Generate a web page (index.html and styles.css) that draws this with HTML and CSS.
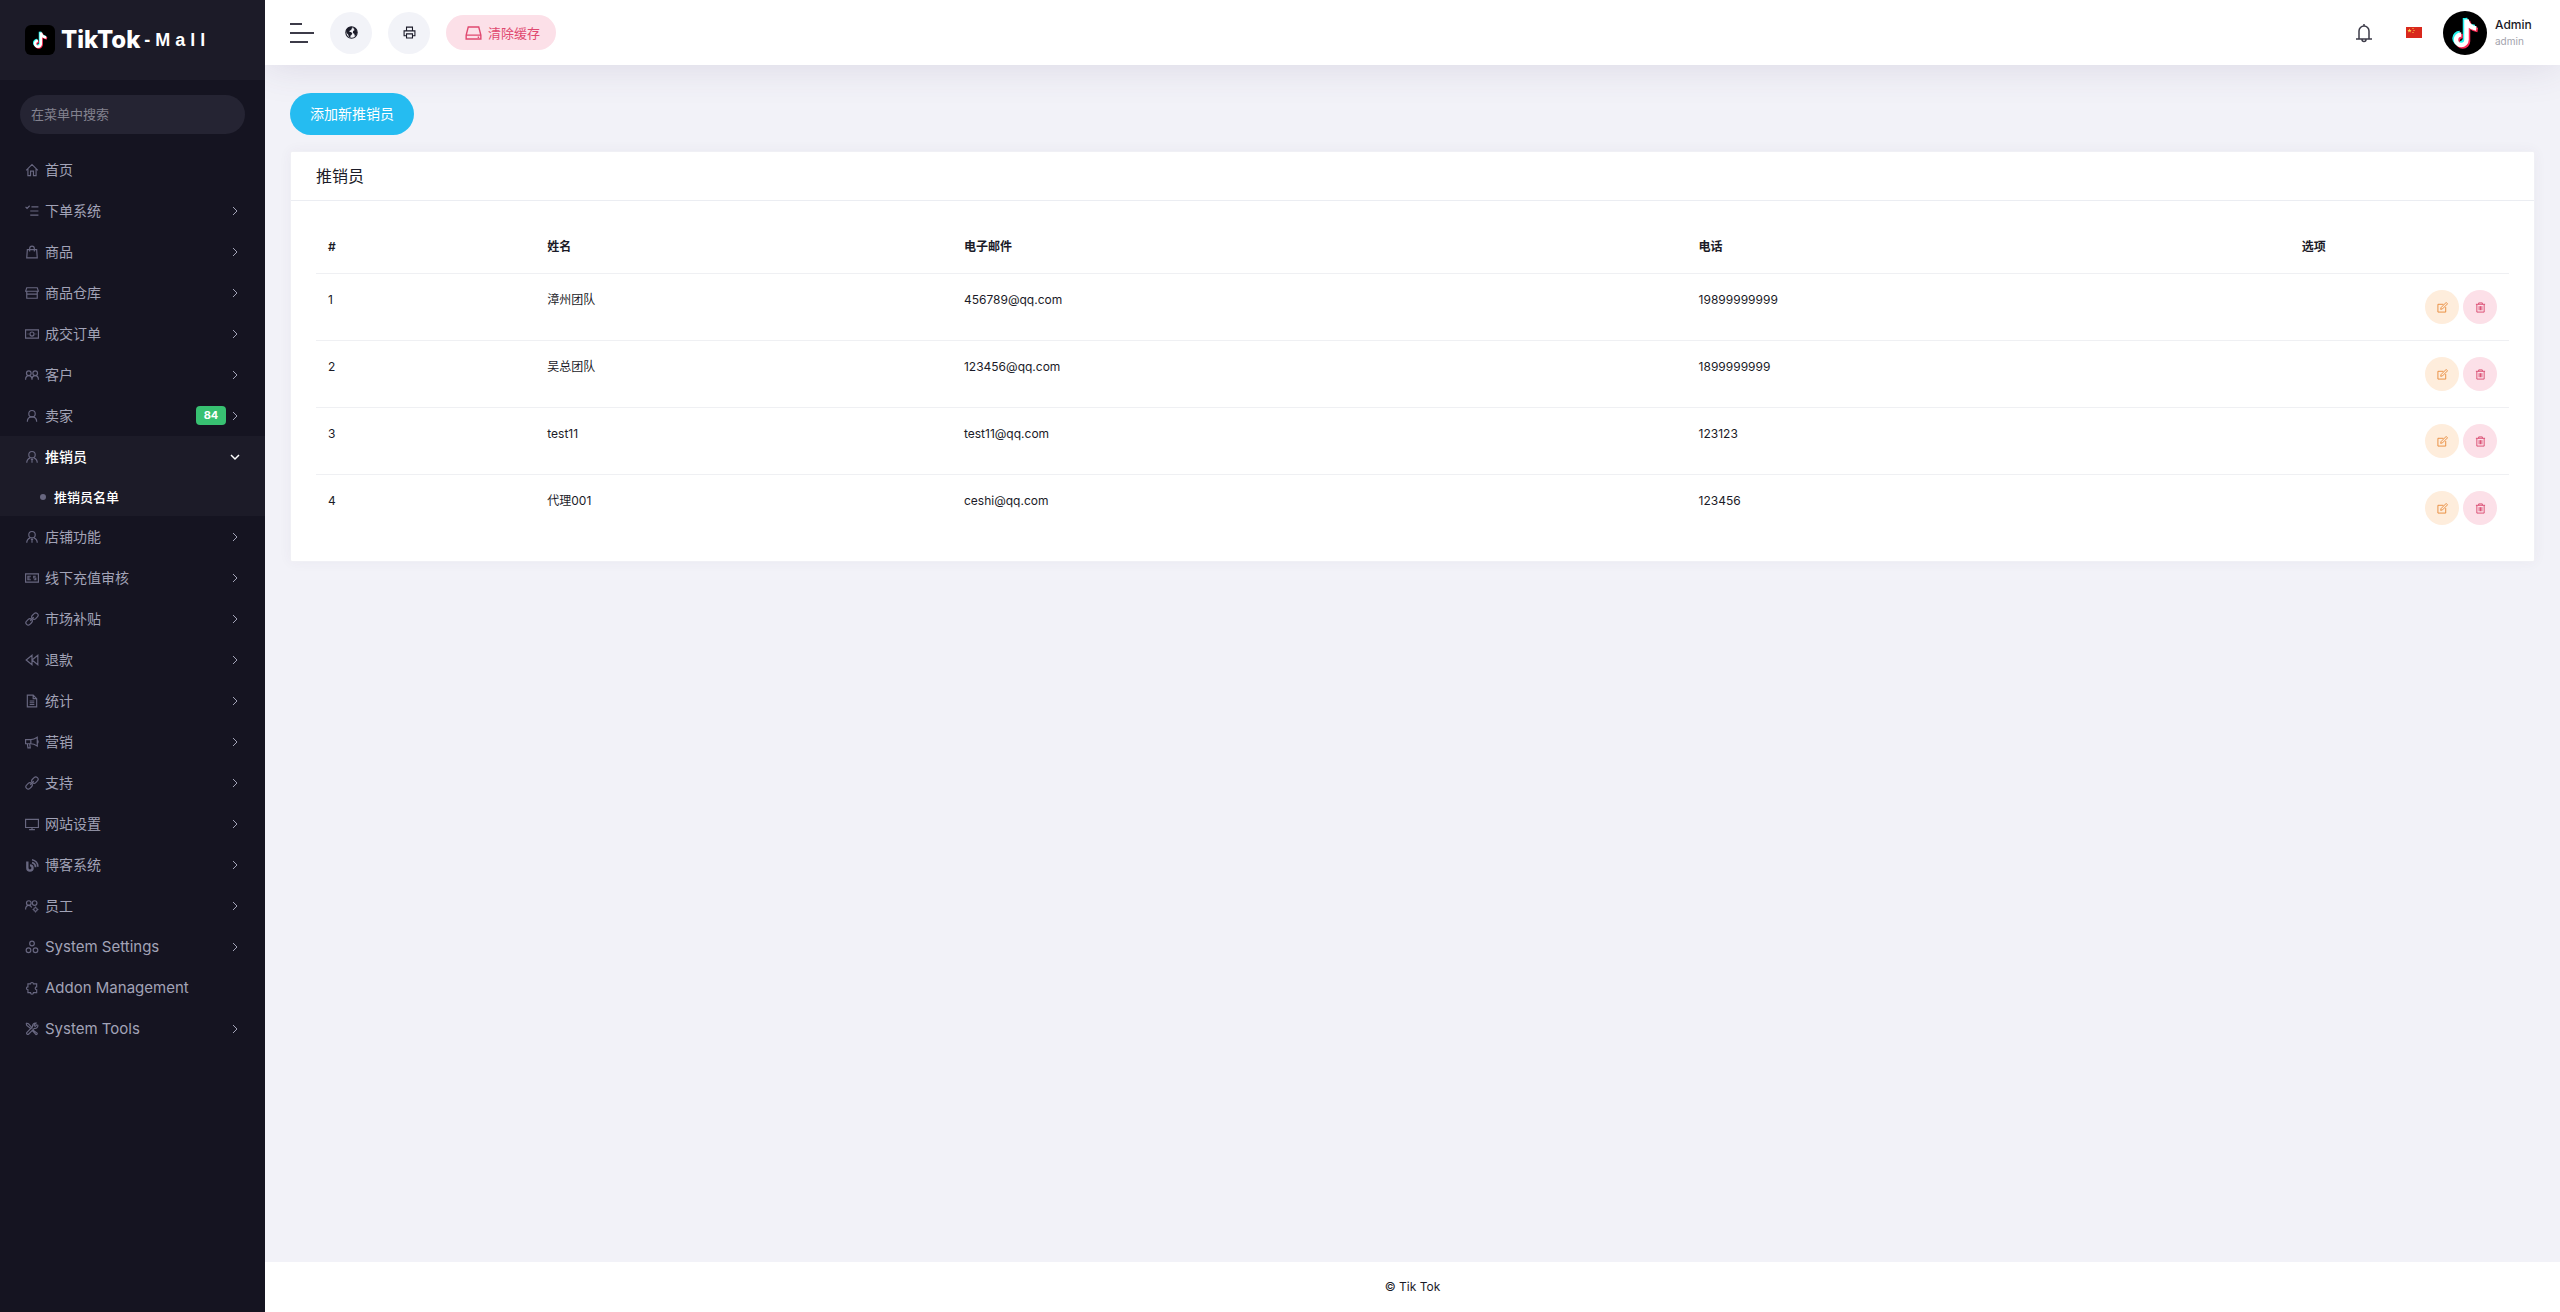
FILE: index.html
```
<!doctype html>
<html lang="zh-CN">
<head>
<meta charset="UTF-8">
<meta name="viewport" content="width=device-width, initial-scale=1">
<title>推销员</title>
<link rel="stylesheet" href="styles.css">
</head>

<body>
<!-- 图标 -->
<svg class="sprite" aria-hidden="true">
	<symbol id="i-home" viewBox="0 0 24 24"><path d="M2 12.5L12 2.5l10 10M5 10v11.5h4.5V14h5v7.5H19V10"/></symbol>
	<symbol id="i-tasks" viewBox="0 0 24 24"><path d="M1 5l2.5 2.5L8 3M11 5h12M9 12h14M9 19h14"/></symbol>
	<symbol id="i-bag" viewBox="0 0 24 24"><path d="M4 8h16l1 14H3zM8 11V6a4 4 0 0 1 8 0v5"/></symbol>
	<symbol id="i-store" viewBox="0 0 24 24"><path d="M3 3h18l2 6H1zM3 9v12h18V9M3 14h18"/></symbol>
	<symbol id="i-money" viewBox="0 0 24 24"><path d="M1 5h22v14H1zM4.500 12h1.500M18 12h1.500"/><circle cx="12" cy="12" r="3.500"/></symbol>
	<symbol id="i-friends" viewBox="0 0 24 24"><circle cx="6.500" cy="9" r="4"/><circle cx="17.500" cy="9" r="4"/><path d="M1 20c0-4 2-7 5.500-7s5.500 3 5.500 7c0-4 2-7 5.500-7s5.500 3 5.500 7"/></symbol>
	<symbol id="i-user" viewBox="0 0 24 24"><circle cx="12" cy="8" r="5.500"/><path d="M4 22c0-5 3-8.500 8-8.500s8 3.500 8 8.500"/></symbol>
	<symbol id="i-agent" viewBox="0 0 24 24"><circle cx="12" cy="8" r="5.500"/><path d="M3 22c0-4 2-7 5.500-8.500M21 22c0-4-2-7-5.500-8.500M12 16v6M10 16h4"/></symbol>
	<symbol id="i-check" viewBox="0 0 24 24"><path d="M1 5h22v14H1zM10 9H5v6h5M6 12h3M18.500 9H15v3h3.500v3H15"/></symbol>
	<symbol id="i-link" viewBox="0 0 24 24"><rect x="11" y="3" width="12" height="8" rx="4" transform="rotate(-45 17 7)"/><rect x="1" y="13" width="12" height="8" rx="4" transform="rotate(-45 7 17)"/><path d="M9 15l6-6"/></symbol>
	<symbol id="i-back" viewBox="0 0 24 24"><path d="M12 4v16L2 12zM22 4v16l-10-8z"/></symbol>
	<symbol id="i-file" viewBox="0 0 24 24"><path d="M4 2h10l6 6v14H4zM14 2v6h6M8 12h8M8 15h8M8 18h8"/></symbol>
	<symbol id="i-horn" viewBox="0 0 24 24"><path d="M1 8h9c4 0 8-2 11-4v15c-3-2-7-4-11-4H1zM10 8v7M4 15l1 7h4l-1-7M21 9c2 0 2 5 0 5"/></symbol>
	<symbol id="i-screen" viewBox="0 0 24 24"><path d="M1 4h22v14H1zM12 18v3.500M7 21.500h10"/></symbol>
	<symbol id="i-blog" viewBox="0 0 24 24"><path d="M4 6v11a4.500 4.500 0 1 0 4.500-4.500" stroke-width="4"/><path d="M12 8a8 8 0 0 1 6 8M12 3a12 12 0 0 1 10 12" stroke-width="3"/></symbol>
	<symbol id="i-staff" viewBox="0 0 24 24"><circle cx="6.500" cy="7" r="4"/><circle cx="16.500" cy="7" r="4"/><path d="M1 18c0-4 2-7 5.500-7 2.500 0 4 1.500 5 3.500"/><circle cx="18" cy="18" r="3"/><path d="M18 13v2M18 21v2M13 18h2M21 18h2"/></symbol>
	<symbol id="i-cubes" viewBox="0 0 24 24"><circle cx="12" cy="6" r="4"/><circle cx="6" cy="17.500" r="4"/><circle cx="18" cy="17.500" r="4"/></symbol>
	<symbol id="i-addon" viewBox="0 0 24 24"><path d="M5 5h4.500a2.500 2.500 0 1 1 5 0H20v5a2 2 0 1 0 0 5v5h-5.500a2.500 2.500 0 1 1-5 0H5v-5a2.500 2.500 0 1 1 0-5z"/></symbol>
	<symbol id="i-tools" viewBox="0 0 24 24"><path d="M2 2l4 1 7 8M14 14l7 5.500a2 2 0 0 1-2 2L13 15M2 2l1 4 8 6M21 4l-3.500 3.500-2-2L19 2a5 5 0 0 0-6 6L3 18a2.200 2.200 0 0 0 3 3L16 11a5 5 0 0 0 6-6"/></symbol>
	<symbol id="i-right" viewBox="0 0 10 10"><path d="M3 1l4 4-4 4"/></symbol>
	<symbol id="i-down" viewBox="0 0 10 10"><path d="M1 3l4 4 4-4"/></symbol>
	<symbol id="i-globe" viewBox="0 0 24 24"><circle cx="12" cy="12" r="10.500"/><path class="solid" d="M2 9C3 4.500 7 1.500 12 1.500l2 2-2.500 2 .5 2-3 1-1 2.500h3l2.500 2.500-1.500 3-2 1.500v4L7 20l-1-4-3-3zM16 2.500l5 4 1.500 5.500-2 5.500-2.500.5-1-3.500-2.500-1.500.5-4 3-1.500-2-2z"/></symbol>
	<symbol id="i-print" viewBox="0 0 24 24"><path d="M6.500 9V2h11v7M6.500 18H2V9h20v9h-4.500M6.500 14.500h11V22h-11z"/></symbol>
	<symbol id="i-hdd" viewBox="0 0 24 20"><path d="M1.500 13L4.500 1.500h15l3 11.500v5.500h-21zM1.500 13h21M18 16h2"/></symbol>
	<symbol id="i-bell" viewBox="0 0 16 20"><path d="M0 16h16M3 16V8a5 5 0 0 1 10 0v8M8 3V1M6 16.500a2 2 0 0 0 4 0" stroke-width="1.500"/></symbol>
	<symbol id="i-edit" viewBox="0 0 24 24"><path d="M14 5H2v17h17V11M8 16l1-4L20 1l3 3-11 11z"/></symbol>
	<symbol id="i-trash" viewBox="0 0 24 24"><path d="M2 5h20M8 5V2h8v3M4 5v17h16V5M9 9v9M12 9v9M15 9v9"/></symbol>
	<symbol id="i-note" viewBox="0 0 24 24">
		<path class="cyan" d="M12 2v13.500a3.500 3.500 0 1 1-3.500-3.500M12 2c.5 3.500 3 5.500 6.500 6"/>
		<path class="red" d="M14 4v13.500a3.500 3.500 0 1 1-3.500-3.500M14 4c.5 3.500 3 5.500 6.500 6"/>
		<path class="white" d="M13 3v13.500a3.500 3.500 0 1 1-3.500-3.500M13 3c.5 3.500 3 5.500 6.500 6"/>
	</symbol>
</svg>

<div class="page">
	<aside class="sidebar">
		<a class="brand" href="#">
			<span class="brand-logo"><svg><use href="#i-note"/></svg></span>
			<span class="brand-name">TikTok</span>
			<span class="brand-mall">- M a l l</span>
		</a>
		<div class="search">
			<input type="text" placeholder="在菜单中搜索" aria-label="在菜单中搜索">
		</div>
		<nav>
			<ul class="menu">
				<li><a href="#"><svg class="icon"><use href="#i-home"/></svg><span class="text">首页</span></a></li>
				<li><a href="#"><svg class="icon"><use href="#i-tasks"/></svg><span class="text">下单系统</span><svg class="arrow"><use href="#i-right"/></svg></a></li>
				<li><a href="#"><svg class="icon"><use href="#i-bag"/></svg><span class="text">商品</span><svg class="arrow"><use href="#i-right"/></svg></a></li>
				<li><a href="#"><svg class="icon"><use href="#i-store"/></svg><span class="text">商品仓库</span><svg class="arrow"><use href="#i-right"/></svg></a></li>
				<li><a href="#"><svg class="icon"><use href="#i-money"/></svg><span class="text">成交订单</span><svg class="arrow"><use href="#i-right"/></svg></a></li>
				<li><a href="#"><svg class="icon"><use href="#i-friends"/></svg><span class="text">客户</span><svg class="arrow"><use href="#i-right"/></svg></a></li>
				<li><a href="#"><svg class="icon"><use href="#i-user"/></svg><span class="text">卖家</span><span class="badge">84</span><svg class="arrow"><use href="#i-right"/></svg></a></li>
				<li class="active">
					<a href="#"><svg class="icon"><use href="#i-agent"/></svg><span class="text">推销员</span><svg class="arrow"><use href="#i-down"/></svg></a>
					<ul class="submenu">
						<li><a href="#">推销员名单</a></li>
					</ul>
				</li>
				<li><a href="#"><svg class="icon"><use href="#i-agent"/></svg><span class="text">店铺功能</span><svg class="arrow"><use href="#i-right"/></svg></a></li>
				<li><a href="#"><svg class="icon"><use href="#i-check"/></svg><span class="text">线下充值审核</span><svg class="arrow"><use href="#i-right"/></svg></a></li>
				<li><a href="#"><svg class="icon"><use href="#i-link"/></svg><span class="text">市场补贴</span><svg class="arrow"><use href="#i-right"/></svg></a></li>
				<li><a href="#"><svg class="icon"><use href="#i-back"/></svg><span class="text">退款</span><svg class="arrow"><use href="#i-right"/></svg></a></li>
				<li><a href="#"><svg class="icon"><use href="#i-file"/></svg><span class="text">统计</span><svg class="arrow"><use href="#i-right"/></svg></a></li>
				<li><a href="#"><svg class="icon"><use href="#i-horn"/></svg><span class="text">营销</span><svg class="arrow"><use href="#i-right"/></svg></a></li>
				<li><a href="#"><svg class="icon"><use href="#i-link"/></svg><span class="text">支持</span><svg class="arrow"><use href="#i-right"/></svg></a></li>
				<li><a href="#"><svg class="icon"><use href="#i-screen"/></svg><span class="text">网站设置</span><svg class="arrow"><use href="#i-right"/></svg></a></li>
				<li><a href="#"><svg class="icon"><use href="#i-blog"/></svg><span class="text">博客系统</span><svg class="arrow"><use href="#i-right"/></svg></a></li>
				<li><a href="#"><svg class="icon"><use href="#i-staff"/></svg><span class="text">员工</span><svg class="arrow"><use href="#i-right"/></svg></a></li>
				<li><a href="#"><svg class="icon"><use href="#i-cubes"/></svg><span class="text en">System Settings</span><svg class="arrow"><use href="#i-right"/></svg></a></li>
				<li><a href="#"><svg class="icon"><use href="#i-addon"/></svg><span class="text en">Addon Management</span></a></li>
				<li><a href="#"><svg class="icon"><use href="#i-tools"/></svg><span class="text en">System Tools</span><svg class="arrow"><use href="#i-right"/></svg></a></li>
			</ul>
		</nav>
	</aside>

	<div class="content">
		<header class="topbar">
			<button class="toggler" type="button" aria-label="菜单"><span></span><span></span><span></span></button>
			<a class="round" href="#" aria-label="浏览网站"><svg><use href="#i-globe"/></svg></a>
			<a class="round" href="#" aria-label="POS"><svg><use href="#i-print"/></svg></a>
			<a class="clear-cache" href="#"><svg><use href="#i-hdd"/></svg>清除缓存</a>
			<div class="topbar-right">
				<button class="bell" type="button" aria-label="通知"><svg><use href="#i-bell"/></svg></button>
				<button class="lang" type="button" aria-label="语言">
					<svg viewBox="0 0 16 11"><path fill="#d9281c" d="M0 0h16v11H0z"/><path fill="#fbd34a" d="M3.500 1.500l.6 1.400h1.500l-1.200 1 .5 1.500-1.400-.9-1.400.9.500-1.500-1.200-1h1.500zM6.500 1h1v1h-1zM7.500 3h1v1h-1zM6.500 5h1v1h-1z"/></svg>
				</button>
				<a class="account" href="#">
					<span class="avatar"><svg><use href="#i-note"/></svg></span>
					<span class="who"><b>Admin</b><small>admin</small></span>
				</a>
			</div>
		</header>

		<main class="main">
			<a class="btn-add" href="#">添加新推销员</a>
			<section class="card">
				<h1 class="card-header">推销员</h1>
				<div class="card-body">
					<table>
						<colgroup><col class="w-id"><col class="w-name"><col class="w-mail"><col class="w-phone"><col class="w-opt"></colgroup>
						<thead>
							<tr><th>#</th><th>姓名</th><th>电子邮件</th><th>电话</th><th>选项</th></tr>
						</thead>
						<tbody>
							<tr>
								<td>1</td><td>漳州团队</td><td>456789@qq.com</td><td>19899999999</td>
								<td class="options"><div><a class="edit" href="#" aria-label="编辑"><svg><use href="#i-edit"/></svg></a><a class="delete" href="#" aria-label="删除"><svg><use href="#i-trash"/></svg></a></div></td>
							</tr>
							<tr>
								<td>2</td><td>吴总团队</td><td>123456@qq.com</td><td>1899999999</td>
								<td class="options"><div><a class="edit" href="#" aria-label="编辑"><svg><use href="#i-edit"/></svg></a><a class="delete" href="#" aria-label="删除"><svg><use href="#i-trash"/></svg></a></div></td>
							</tr>
							<tr>
								<td>3</td><td>test11</td><td>test11@qq.com</td><td>123123</td>
								<td class="options"><div><a class="edit" href="#" aria-label="编辑"><svg><use href="#i-edit"/></svg></a><a class="delete" href="#" aria-label="删除"><svg><use href="#i-trash"/></svg></a></div></td>
							</tr>
							<tr>
								<td>4</td><td>代理001</td><td>ceshi@qq.com</td><td>123456</td>
								<td class="options"><div><a class="edit" href="#" aria-label="编辑"><svg><use href="#i-edit"/></svg></a><a class="delete" href="#" aria-label="删除"><svg><use href="#i-trash"/></svg></a></div></td>
							</tr>
						</tbody>
					</table>
				</div>
			</section>
		</main>

		<footer class="footer">© Tik Tok</footer>
	</div>
</div>
</body>
</html>
```

FILE: styles.css
```
*{box-sizing:border-box;}
body,ul,h1{margin:0;padding:0;}
ul{list-style-type:none;}
a{color:inherit;text-decoration:none;}
button{padding:0;border:0;background:none;cursor:pointer;}
svg{display:block;fill:none;stroke:currentColor;stroke-width:2;}
body{background:#f2f2f8;color:#1b1b28;font:12px/20px Inter,"Noto Sans CJK SC",sans-serif;}
.sprite{position:absolute;width:0;height:0;}
.solid{fill:currentColor;stroke:none;}
.cyan{stroke:#25f4ee;stroke-width:3;}
.red{stroke:#fe2c55;stroke-width:3;}
.white{stroke:#fff;stroke-width:3;}
.page{display:flex;min-height:100vh;}

/* 侧边栏 */
.sidebar{flex:none;width:265px;background:#151421;color:#a2a3b7;position:relative;z-index:2;}
.brand{display:flex;align-items:center;height:80px;padding:0 25px;background:#1c1b28;color:#fff;font-weight:700;}
.brand-logo{width:30px;height:30px;padding:5px;border-radius:6px;background:#000;margin-right:6px;}
.brand-logo svg{width:20px;height:20px;}
.brand-name{font-size:24px;font-weight:800;margin-right:4px;}
.brand-mall{font:700 18px/24px "Liberation Sans",sans-serif;}
.search{padding:15px 20px;}
.search input{display:block;width:100%;height:39px;padding:0 11px 2px;border:0;border-radius:20px;background:#252433;color:#fff;font:13px/20px Inter,"Noto Sans CJK SC",sans-serif;}
.search input::placeholder{color:#83828f;opacity:1;}
.menu{font-size:14px;}
.menu > li > a{display:flex;align-items:center;height:41px;padding:0 25px;}
.icon{width:14px;height:14px;margin-right:6px;color:#686780;}
.text{flex:1;}
.en{font-size:15px;}
.arrow{width:10px;height:10px;stroke-width:1;}
.badge{width:30px;height:19px;margin-right:4px;border-radius:4px;background:#38c172;color:#fff;font-size:11px;line-height:19px;font-weight:700;text-align:center;}
.active{background:#1c1b28;color:#fff;font-weight:500;}
.active .arrow{stroke-width:1.500;}
.submenu a{display:flex;align-items:center;height:39px;padding-left:40px;font-size:13px;}
.submenu a::before{content:"";width:6px;height:6px;margin-right:8px;border-radius:50%;background:#686780;}

/* 顶栏 */
.content{flex:1;min-width:0;display:flex;flex-direction:column;}
.topbar{display:flex;align-items:center;height:65px;padding:0 25px;background:#fff;box-shadow:0 0 40px rgba(82,63,105,.15);}
.toggler{display:flex;flex-direction:column;gap:7px;width:24px;margin-right:16px;}
.toggler span{width:24px;height:2px;background:#3c3b48;}
.toggler span:first-child{width:12px;}
.toggler span:last-child{width:18px;}
.round{display:flex;align-items:center;justify-content:center;width:42px;height:42px;margin-right:16px;border-radius:50%;background:#f2f3f8;}
.round svg{width:13px;height:13px;}
.clear-cache{display:flex;align-items:center;gap:6px;height:35px;padding:0 16px 0 19px;border-radius:18px;background:#fce0e8;color:#e0486f;font-size:13px;}
.clear-cache svg{width:17px;height:14px;}
.topbar-right{display:flex;align-items:center;margin-left:auto;}
.bell{color:#3c3b48;margin-right:34px;}
.bell svg{width:16px;height:20px;}
.lang{margin-right:21px;}
.lang svg{width:16px;height:11px;stroke:none;}
.account{display:flex;align-items:center;gap:8px;}
.avatar{width:44px;height:44px;padding:4px;border-radius:50%;background:#000;}
.avatar svg{width:36px;height:36px;}
.who{display:flex;flex-direction:column;width:40px;}
.who b{font-size:12px;line-height:16px;font-weight:500;}
.who small{color:#a3a3ad;font-size:10px;line-height:16px;}

/* 列表 */
.main{flex:1;padding:28px 25px;}
.btn-add{display:inline-block;height:42px;padding:0 20px;border-radius:21px;background:#25bcf1;color:#fff;font-size:14px;line-height:42px;}
.card{margin-top:16px;background:#fff;border-radius:2px;border:1px solid #f0f0f5;box-shadow:0 0 13px rgba(82,63,105,.05);}
.card-header{padding:14px 25px;border-bottom:1px solid #ebedf2;font-size:16px;line-height:20px;font-weight:400;}
.card-body{padding:20px 25px;}
table{width:100%;border-collapse:collapse;table-layout:fixed;}
.w-id,.w-opt{width:10%;}
.w-name{width:19%;}
.w-mail{width:33.5%;}
.w-phone{width:27.5%;}
th,td{padding:16px 12px;text-align:left;vertical-align:top;}
th{font-weight:600;}
td{border-top:1px solid #eff0f3;}
.options div{display:flex;justify-content:flex-end;gap:4px;}
.options a{display:flex;align-items:center;justify-content:center;width:34px;height:34px;border-radius:50%;}
.options svg{width:11px;height:11px;}
.edit{background:#feeddc;color:#e88a3a;}
.delete{background:#fce0e8;color:#d9486e;}
.footer{height:50px;background:#fff;line-height:50px;text-align:center;}
```
